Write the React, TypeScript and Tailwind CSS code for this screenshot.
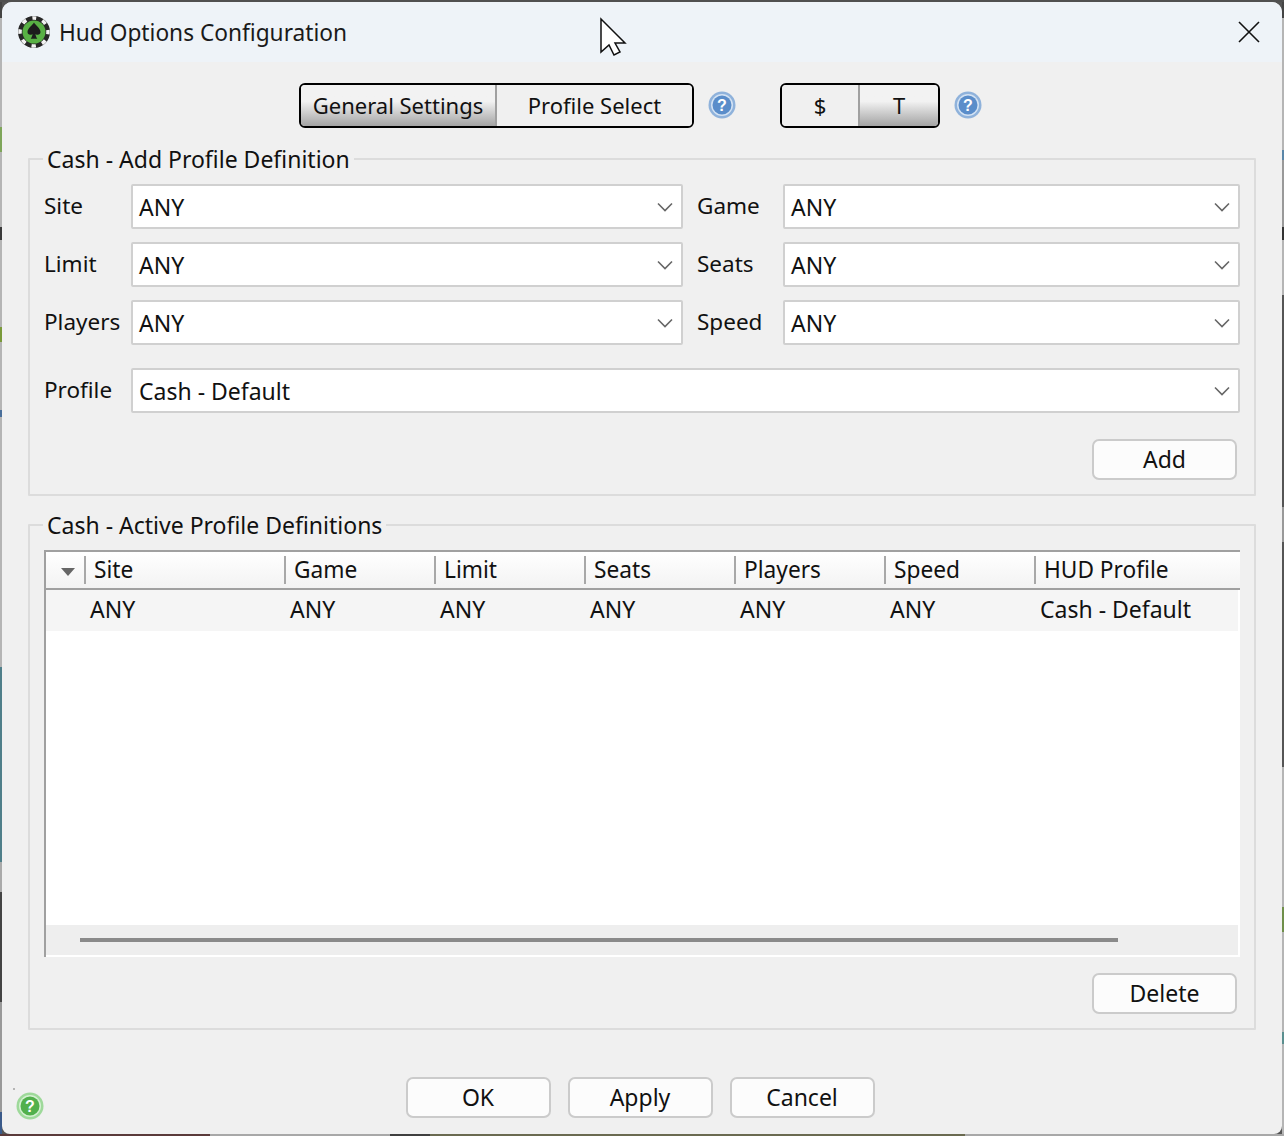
import React from 'react';

const font = { fontFamily: '"Noto Sans", sans-serif' };

const ChipIcon: React.FC = () => (
  <svg width="32" height="32" viewBox="0 0 32 32">
    <circle cx="16" cy="16" r="16" fill="#262626" />
    <circle cx="16" cy="16" r="14" fill="none" stroke="#f2f2f2" strokeWidth="3.500" strokeDasharray="4.500 6.500" strokeDashoffset="2.250" transform="rotate(-90 16 16)" />
    <circle cx="16" cy="16" r="11.500" fill="#58b044" />
    <path d="M16 6.500c2 3.400 6.500 5.600 6.500 9.600 0 2.700-3 3.600-5 1.900.2 2 .8 3.400 1.800 4.700h-6.600c1-1.300 1.600-2.700 1.800-4.700-2 1.700-5 .8-5-1.900 0-4 4.500-6.200 6.500-9.600z" fill="#1c1c1c" />
  </svg>
);

const CloseIcon: React.FC = () => (
  <svg width="22" height="22" viewBox="0 0 22 22" fill="none" stroke="#111" strokeWidth="1.600">
    <path d="M1 1l20 20M21 1L1 21" />
  </svg>
);

const Cursor: React.FC = () => (
  <svg width="28" height="40" viewBox="0 0 28 40" className="absolute left-[599px] top-[15px]">
    <path d="M2 2v33l8-7 5 10 6-3-5-9h10z" fill="#fff" stroke="#111" strokeWidth="1.500" strokeLinejoin="miter" />
  </svg>
);

const HelpIcon: React.FC<{ green?: boolean }> = ({ green }) => {
  const outer = green ? '#9ed99a' : '#8fb2db';
  const ring = green ? '#d5f0d2' : '#d3e2f3';
  const inner = green ? '#52b04c' : '#5a8dca';
  return (
    <svg width="28" height="28" viewBox="0 0 28 28">
      <circle cx="14" cy="14" r="13.500" fill={outer} />
      <circle cx="14" cy="14" r="11" fill={ring} />
      <circle cx="14" cy="14" r="9.500" fill={inner} />
      <text x="14" y="19.500" textAnchor="middle" fontSize="16" fontWeight="700" fill="#fff" fontFamily='"Liberation Sans", sans-serif'>?</text>
    </svg>
  );
};

const Chevron: React.FC = () => (
  <svg width="16" height="10" viewBox="0 0 16 10" fill="none" stroke="#666" strokeWidth="1.600">
    <path d="M1 1.500l7 7 7-7" />
  </svg>
);

const Select: React.FC<{ value: string; className?: string }> = ({ value, className }) => (
  <div className={`flex h-[45px] items-center justify-between rounded-[2px] border-2 border-[#d0d0d0] bg-white pl-[6px] pr-[8px] text-[23px] leading-none text-[#111] ${className || ''}`}>
    <span className="pt-[2px]">{value}</span>
    <Chevron />
  </div>
);

const Field: React.FC<{ label: string; value: string; labelW: string }> = ({ label, value, labelW }) => (
  <div className="flex items-center">
    <span className={`${labelW} -mt-[1px] text-[22.500px] leading-none text-[#111]`}>{label}</span>
    <Select value={value} className="flex-1" />
  </div>
);

const Btn: React.FC<{ label: string }> = ({ label }) => (
  <button className="flex h-[41px] w-[145px] items-center justify-center rounded-[7px] border-2 border-[#cbcbcb] bg-[#fcfcfc] text-[23px] leading-none text-[#111]">
    {label}
  </button>
);

const Toggle: React.FC<{ label: string; pressed?: boolean; className: string }> = ({ label, pressed, className }) => (
  <div className={`flex items-center justify-center text-[22px] leading-none text-[#111] ${pressed ? 'bg-gradient-to-b from-[#f2f2f2] from-40% to-[#a4a4a4]' : 'bg-[#f0f0f0]'} ${className}`}>
    {label}
  </div>
);

const columns = [
  { name: 'Site', w: 'w-[200px]' },
  { name: 'Game', w: 'w-[150px]' },
  { name: 'Limit', w: 'w-[150px]' },
  { name: 'Seats', w: 'w-[150px]' },
  { name: 'Players', w: 'w-[150px]' },
  { name: 'Speed', w: 'w-[150px]' },
  { name: 'HUD Profile', w: 'flex-1' },
];

const rowCells = [
  { v: 'ANY', w: 'w-[200px]' },
  { v: 'ANY', w: 'w-[150px]' },
  { v: 'ANY', w: 'w-[150px]' },
  { v: 'ANY', w: 'w-[150px]' },
  { v: 'ANY', w: 'w-[150px]' },
  { v: 'ANY', w: 'w-[150px]' },
  { v: 'Cash - Default', w: 'flex-1' },
];

const App: React.FC = () => {
  return (
    <div className="flex h-[1136px] w-[1284px] flex-col overflow-hidden bg-[#555555]" style={font}>
      <div className="h-[2px] shrink-0 bg-[#505050]" />
      <div className="relative flex h-[1132px] shrink-0">
        {/* what the desktop shows down the sides of the window */}
        <div className="w-[2px] shrink-0 bg-[linear-gradient(to_bottom,#444_0,#444_16px,#b5b5b5_16px,#b5b5b5_125px,#7fa65a_125px,#7fa65a_150px,#b5b5b5_150px,#b5b5b5_225px,#3a3a3a_225px,#3a3a3a_238px,#b5b5b5_238px,#b5b5b5_325px,#7a9a3a_325px,#7a9a3a_340px,#b5b5b5_340px,#b5b5b5_408px,#4a6f9a_408px,#4a6f9a_415px,#b5b5b5_415px,#b5b5b5_665px,#4f7f8a_665px,#4f7f8a_860px,#aaaaaa_860px,#aaaaaa_890px,#444_890px,#444_1000px,#999_1000px,#999_1110px,#3a5a8a_1110px)]" />
        <div className="flex w-[1280px] shrink-0 flex-col overflow-hidden rounded-t-[10px] rounded-b-[8px] bg-[#f0f0f0]">
          <div className="flex h-[60px] shrink-0 items-center justify-between bg-[#eef3f8] pl-[16px] pr-[22px]">
            <div className="flex items-center gap-[9px]">
              <ChipIcon />
              <span className="pt-[2px] text-[22.700px] leading-none text-[#1a1a1a]">Hud Options Configuration</span>
            </div>
            <CloseIcon />
          </div>

          <div className="mt-[21px] flex h-[44px] shrink-0 items-center pl-[297px]">
            <div className="flex h-[45px] w-[395px] overflow-hidden rounded-[6px] border-2 border-black">
              <Toggle label="General Settings" pressed className="w-[196px] border-r-2 border-[#a0a0a0]" />
              <Toggle label="Profile Select" className="flex-1" />
            </div>
            <div className="ml-[14px]"><HelpIcon /></div>
            <div className="ml-[44px] flex h-[45px] w-[160px] overflow-hidden rounded-[6px] border-2 border-black">
              <Toggle label="$" className="w-[78px] border-r-2 border-[#a0a0a0]" />
              <Toggle label="T" pressed className="flex-1" />
            </div>
            <div className="ml-[14px]"><HelpIcon /></div>
          </div>

          <fieldset className="mx-[26px] mt-[19px] h-[350px] shrink-0 rounded-[1px] border-2 border-[#dcdcdc] pl-[14px] pr-[14px]">
            <legend className="-ml-[1px] px-[4px] text-[23px] leading-[26px] text-[#111]">Cash - Add Profile Definition</legend>
            <div className="mt-[12px] grid grid-cols-[639px_1fr] gap-x-[14px] gap-y-[13px]">
              <Field label="Site" value="ANY" labelW="w-[87px]" />
              <Field label="Game" value="ANY" labelW="w-[86px]" />
              <Field label="Limit" value="ANY" labelW="w-[87px]" />
              <Field label="Seats" value="ANY" labelW="w-[86px]" />
              <Field label="Players" value="ANY" labelW="w-[87px]" />
              <Field label="Speed" value="ANY" labelW="w-[86px]" />
            </div>
            <div className="mt-[23px]">
              <Field label="Profile" value="Cash - Default" labelW="w-[87px]" />
            </div>
            <div className="mt-[26px] flex justify-end pr-[3px]">
              <Btn label="Add" />
            </div>
          </fieldset>

          <fieldset className="mx-[26px] mt-[16px] h-[518px] shrink-0 rounded-[1px] border-2 border-[#dcdcdc] pl-[14px] pr-[14px]">
            <legend className="-ml-[1px] px-[4px] text-[23px] leading-[26px] text-[#111]">Cash - Active Profile Definitions</legend>
            <div className="mt-[12px] flex h-[407px] flex-col border-t-2 border-l-2 border-[#a0a0a0] bg-white">
              <div className="flex h-[38px] shrink-0 items-center border-b-2 border-[#a0a0a0] bg-gradient-to-b from-white to-[#f3f3f3]">
                <div className="flex h-[28px] w-[40px] shrink-0 items-center justify-center border-r-2 border-[#a8a8a8] pl-[6px] pt-[4px]">
                  <svg width="14" height="8" viewBox="0 0 14 8"><path d="M0 0h14L7 8z" fill="#666" /></svg>
                </div>
                {columns.map((c, i) => (
                  <div key={c.name} className={`flex h-[28px] items-center pl-[8px] text-[22.700px] leading-none text-[#111] ${c.w} ${i < columns.length - 1 ? 'border-r-2 border-[#a8a8a8]' : ''}`}>
                    {c.name}
                  </div>
                ))}
              </div>
              <div className="mr-[2px] flex h-[41px] shrink-0 items-center bg-[#f5f5f5] pb-[2px] pl-[44px] text-[23px] leading-none text-[#111]">
                {rowCells.map((c, i) => (
                  <div key={i} className={c.w}>{c.v}</div>
                ))}
              </div>
              <div className="flex-1" />
              <div className="flex h-[32px] shrink-0 items-center border-b-2 border-r-2 border-white bg-[#eeeeee] pl-[34px]">
                <div className="h-[4px] w-[1038px] bg-[#8a8a8a]" />
              </div>
            </div>
            <div className="mt-[16px] flex justify-end pr-[3px]">
              <Btn label="Delete" />
            </div>
          </fieldset>

          <div className="relative flex flex-1 items-start justify-center gap-[17px] pr-[4px] pt-[47px]">
            <Btn label="OK" />
            <Btn label="Apply" />
            <Btn label="Cancel" />
            <div className="absolute left-[11px] top-[58px] h-[2px] w-[2px] bg-[#b5b5b5]" />
            <div className="absolute left-[14px] top-[62px]"><HelpIcon green /></div>
          </div>
        </div>
        <div className="w-[2px] shrink-0 bg-[linear-gradient(to_bottom,#444_0,#444_16px,#b5b5b5_16px,#b5b5b5_148px,#5a86a8_148px,#5a86a8_158px,#999_158px,#999_225px,#333_225px,#333_238px,#b5b5b5_238px,#b5b5b5_293px,#555_293px,#555_505px,#999_505px,#999_540px,#555_540px,#555_765px,#b5b5b5_765px,#b5b5b5_905px,#6f8f4a_905px,#6f8f4a_930px,#b5b5b5_930px,#b5b5b5_1030px,#5a8f8f_1030px,#5a8f8f_1042px,#b5b5b5_1042px)]" />
        <Cursor />
      </div>
      <div className="h-[2px] shrink-0 bg-[linear-gradient(to_right,#5a3a3a_0,#5a3a3a_210px,#a8a8a8_210px,#a8a8a8_390px,#3f3f3f_390px,#3f3f3f_430px,#6a6a50_430px,#6a6a50_965px,#a8a8a8_965px)]" />
    </div>
  );
};

export default App;
